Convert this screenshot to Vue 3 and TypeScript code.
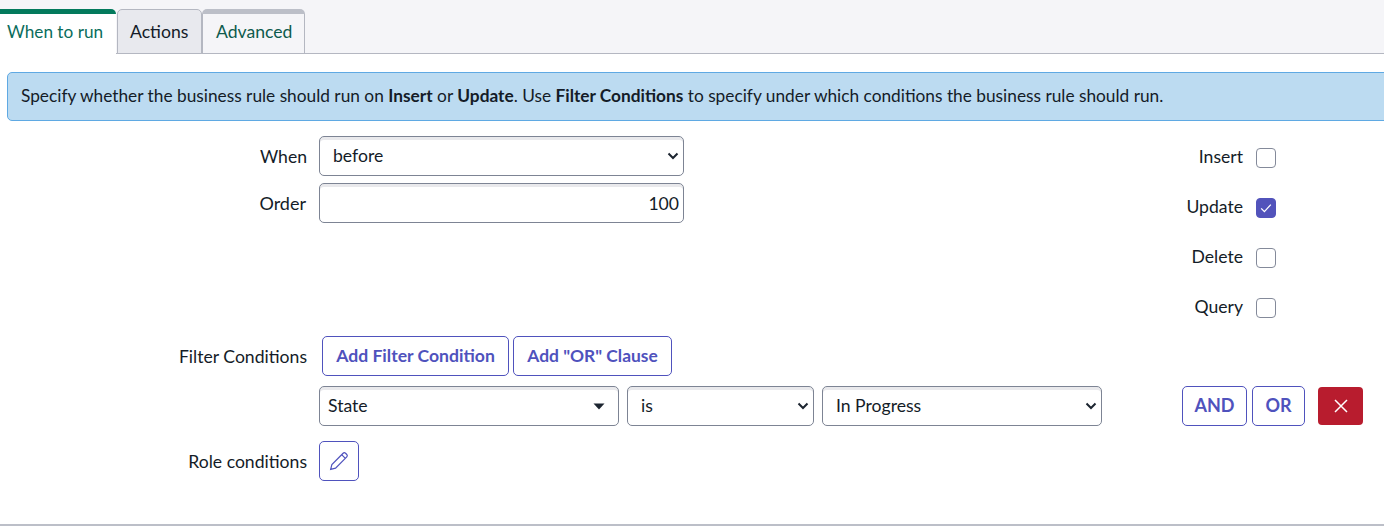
<template>
  <div class="page">
    <div class="tab-bar">
      <div
        v-for="(tab, i) in tabs"
        :key="tab"
        class="tab"
        :class="{ active: i === activeTab, 'tab-dark': tab === 'Actions', 'tab-light': tab === 'Advanced' }"
      >{{ tab }}</div>
    </div>

    <div class="info-box">
      Specify whether the business rule should run on <b>Insert</b> or <b>Update</b>. Use
      <b>Filter Conditions</b> to specify under which conditions the business rule should run.
    </div>

    <div class="top-section">
      <div class="when-col">
        <div class="form-row">
          <label class="field-label">When</label>
          <div class="select-wrap wide">
            <select v-model="when" class="field">
              <option>before</option>
              <option>after</option>
              <option>async</option>
              <option>display</option>
            </select>
            <svg class="chevron" width="12" height="8" viewBox="0 0 12 8"><path d="M1.5 1.5 6 6l4.5-4.5" /></svg>
          </div>
        </div>
        <div class="form-row order-row">
          <label class="field-label order-label">Order</label>
          <input v-model="order" class="field order-input wide" type="text" />
        </div>
      </div>

      <div class="check-col">
        <div v-for="c in checks" :key="c.name" class="check-row">
          <span class="check-label">{{ c.name }}</span>
          <span class="checkbox" :class="{ checked: c.on }" @click="c.on = !c.on">
            <svg v-if="c.on" width="14" height="14" viewBox="0 0 14 14"><path d="M2.2 7.4 5.4 10.6 11.8 3.6" /></svg>
          </span>
        </div>
      </div>
    </div>

    <div class="form-row filter-row">
      <label class="field-label">Filter Conditions</label>
      <div class="filter-buttons">
        <button class="btn btn-add-filter">Add Filter Condition</button>
        <button class="btn btn-add-or">Add "OR" Clause</button>
      </div>
    </div>

    <div class="condition-row">
      <div class="select-wrap state-select">
        <select class="field state-field"><option>State</option></select>
        <svg class="caret" width="12" height="7" viewBox="0 0 12 7"><path d="M0.5 0.5h11L6 6.5z" /></svg>
      </div>
      <div class="select-wrap is-select">
        <select class="field"><option>is</option></select>
        <svg class="chevron" width="12" height="8" viewBox="0 0 12 8"><path d="M1.5 1.5 6 6l4.5-4.5" /></svg>
      </div>
      <div class="select-wrap value-select">
        <select class="field"><option>In Progress</option></select>
        <svg class="chevron" width="12" height="8" viewBox="0 0 12 8"><path d="M1.5 1.5 6 6l4.5-4.5" /></svg>
      </div>
      <div class="cond-actions">
        <button class="btn btn-and">AND</button>
        <button class="btn btn-or">OR</button>
        <button class="btn-remove" aria-label="Remove">
          <svg width="16" height="16" viewBox="0 0 16 16"><path d="M2 2l12 12M14 2 2 14" /></svg>
        </button>
      </div>
    </div>

    <div class="form-row role-row">
      <label class="field-label">Role conditions</label>
      <button class="btn btn-icon" aria-label="Edit roles">
        <svg width="20" height="20" viewBox="0 0 18 18">
          <path d="M1.500 16.500 2.600 12.100 12.700 2 Q13.700 1 14.900 2 L16 3.100 Q17 4.300 16 5.300 L5.900 15.400z M11.400 3.300 14.700 6.600" />
        </svg>
      </button>
    </div>

    <div class="bottom-rule"></div>
  </div>
</template>

<script setup lang="ts">
import { reactive, ref } from 'vue'

const tabs = ['When to run', 'Actions', 'Advanced']
const activeTab = ref(0)
const when = ref('before')
const order = ref('100')

const checks = reactive([
  { name: 'Insert', on: false },
  { name: 'Update', on: true },
  { name: 'Delete', on: false },
  { name: 'Query', on: false }
])
</script>

<style>
html,
body {
  background: #fff;
  overflow: hidden;
}
</style>

<style scoped>
.page {
  width: 1384px;
  height: 526px;
  overflow: hidden;
  font-family: Lato, "Liberation Sans", sans-serif;
  font-size: 17.6px;
  color: #141c28;
  background: #fff;
}

.tab-bar {
  display: flex;
  align-items: flex-end;
  height: 54px;
  padding-top: 9px;
  box-sizing: border-box;
  background: #f5f5f8;
  border-bottom: 1px solid #b4b7c1;
}

.tab {
  height: 45px;
  box-sizing: border-box;
  margin-bottom: -1px;
  padding: 9px 12px 0;
  line-height: 26px;
  border: 1px solid #b4b7c1;
  border-radius: 5px 5px 0 0;
}

.tab.active {
  width: 116px;
  padding-left: 7px;
  padding-right: 0;
  margin-right: 1px;
  color: #0b6d5c;
  background: #fff;
  border: 0;
  border-top: 5px solid #037a5c;
  padding-top: 5px;
  border-radius: 0 5px 0 0;
  font-size: 17.2px;
}

.tab-dark {
  width: 85px;
  background: #e8e9ee;
}

.tab-light {
  width: 103px;
  padding-left: 13px;
  color: #0e5b4d;
  background: #f5f5f8;
  border-top: 5px solid #bcbfc8;
  padding-top: 5px;
}

.info-box {
  margin: 18px 0 15px 7px;
  width: 1400px;
  height: 49px;
  box-sizing: border-box;
  padding-left: 13px;
  line-height: 45px;
  font-size: 17.3px;
  background: #bcdbf1;
  border: 1px solid #5fa9e3;
  border-radius: 5px;
  white-space: nowrap;
}

.info-box b {
  font-weight: 700;
}

.top-section {
  display: flex;
  height: 200px;
}

.when-col {
  width: 684px;
}

.form-row {
  display: flex;
  align-items: center;
}

.order-row {
  margin-top: 7px;
}

.field-label {
  width: 307px;
  margin-right: 12px;
  text-align: right;
  flex-shrink: 0;
}

.order-label {
  width: 306px;
  margin-right: 13px;
  font-size: 18px;
}

.select-wrap {
  position: relative;
  box-sizing: border-box;
}

.wide {
  width: 365px;
}

.field {
  display: block;
  width: 100%;
  height: 40px;
  box-sizing: border-box;
  margin: 0;
  padding: 0 13px 2px;
  font: inherit;
  color: inherit;
  background: #fff;
  border: 1px solid #7d8494;
  border-radius: 5px;
  box-shadow: inset 0 3px 0 #e9e9ec;
  outline: none;
  appearance: none;
}

.order-input {
  width: 365px;
  padding-right: 4px;
  padding-bottom: 0;
  text-align: right;
}

.chevron {
  position: absolute;
  right: 5px;
  top: 16px;
  fill: none;
  stroke: #1c2530;
  stroke-width: 2;
  pointer-events: none;
}

.caret {
  position: absolute;
  right: 14px;
  top: 17px;
  fill: #1c2530;
  pointer-events: none;
}

.check-col {
  margin-left: 487px;
  padding-top: 12px;
}

.check-row {
  display: flex;
  align-items: center;
  justify-content: flex-end;
  width: 105px;
  height: 20px;
  margin-bottom: 30px;
}

.check-label {
  margin-right: 13px;
  margin-bottom: 3px;
}

.checkbox {
  display: flex;
  align-items: center;
  justify-content: center;
  width: 20px;
  height: 20px;
  box-sizing: border-box;
  flex-shrink: 0;
  border: 1px solid #848a9a;
  border-radius: 4px;
}

.checkbox.checked {
  background: #5253bb;
  border-color: #5253bb;
}

.checkbox svg {
  fill: none;
  stroke: #fff;
  stroke-width: 1.3;
}

.filter-row {
  height: 40px;
}

.filter-buttons {
  display: flex;
  gap: 4px;
  margin-left: 3px;
}

.btn {
  height: 40px;
  box-sizing: border-box;
  padding: 0;
  font: inherit;
  font-weight: 700;
  color: #4f52bd;
  background: #fff;
  border: 1px solid #4f52bd;
  border-radius: 5px;
}

.btn-add-filter {
  width: 187px;
  padding-bottom: 2px;
}

.btn-add-or {
  width: 159px;
  padding-bottom: 2px;
  font-size: 17.4px;
}

.condition-row {
  display: flex;
  margin-top: 10px;
  margin-left: 319px;
}

.state-select {
  width: 300px;
}

.state-field {
  padding-left: 8px;
}

.is-select {
  width: 187px;
  margin-left: 8px;
}

.value-select {
  width: 280px;
  margin-left: 8px;
}

.cond-actions {
  display: flex;
  align-items: center;
  margin-left: 80px;
}

.btn-and {
  width: 65px;
  padding-bottom: 2px;
  font-size: 18px;
}

.btn-or {
  width: 53px;
  padding-bottom: 2px;
  margin-left: 5px;
  font-size: 18px;
}

.btn-remove {
  display: flex;
  align-items: center;
  justify-content: center;
  width: 45px;
  height: 38px;
  margin-left: 13px;
  padding: 0;
  background: #b81c2e;
  border: 0;
  border-radius: 4px;
}

.btn-remove svg {
  fill: none;
  stroke: #fff;
  stroke-width: 1.5;
}

.role-row {
  margin-top: 15px;
}

.btn-icon {
  display: flex;
  align-items: center;
  justify-content: center;
  width: 40px;
  padding: 0;
}

.btn-icon svg {
  fill: none;
  stroke: #4f52bd;
  stroke-width: 1.1;
}

.bottom-rule {
  margin-top: 43px;
  height: 2px;
  background: #bcbfc8;
}
</style>
